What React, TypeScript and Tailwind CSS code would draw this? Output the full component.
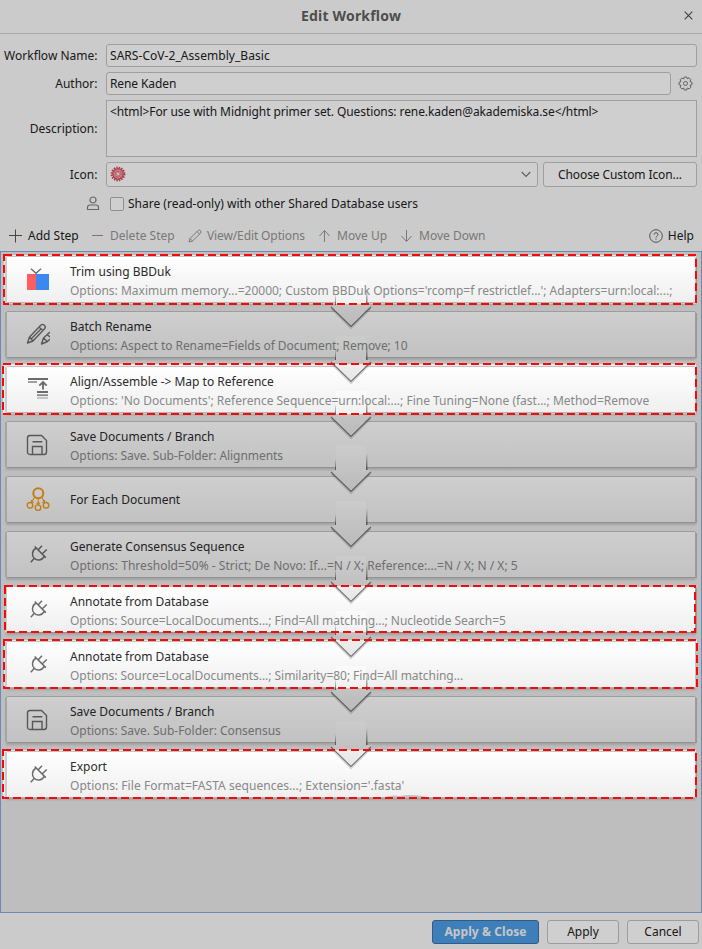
import type { ReactNode } from "react";

type IconName = "trim" | "rename" | "align" | "save" | "each" | "plug";

interface Step {
  icon: IconName;
  title: string;
  options?: string;
  tracking?: string;
}

const steps: Step[] = [
  { icon: "trim", title: "Trim using BBDuk", options: "Options: Maximum memory...=20000; Custom BBDuk Options='rcomp=f restrictlef...'; Adapters=urn:local:...;" },
  { icon: "rename", title: "Batch Rename", options: "Options: Aspect to Rename=Fields of Document; Remove; 10", tracking: "tracking-[-0.05px]" },
  { icon: "align", title: "Align/Assemble -> Map to Reference", options: "Options: 'No Documents'; Reference Sequence=urn:local:...; Fine Tuning=None (fast...; Method=Remove" },
  { icon: "save", title: "Save Documents / Branch", options: "Options: Save. Sub-Folder: Alignments", tracking: "tracking-[-0.05px]" },
  { icon: "each", title: "For Each Document" },
  { icon: "plug", title: "Generate Consensus Sequence", options: "Options: Threshold=50% - Strict; De Novo: If...=N / X; Reference:...=N / X; N / X; 5", tracking: "tracking-[0.03px]" },
  { icon: "plug", title: "Annotate from Database", options: "Options: Source=LocalDocuments...; Find=All matching...; Nucleotide Search=5", tracking: "tracking-[-0.045px]" },
  { icon: "plug", title: "Annotate from Database", options: "Options: Source=LocalDocuments...; Similarity=80; Find=All matching...", tracking: "tracking-[-0.045px]" },
  { icon: "save", title: "Save Documents / Branch", options: "Options: Save. Sub-Folder: Consensus", tracking: "tracking-[-0.03px]" },
  { icon: "plug", title: "Export", options: "Options: File Format=FASTA sequences...; Extension='.fasta'", tracking: "tracking-[0.045px]" },
];

/* Dashed frames around the steps that stay bright: x, y, width, height of the stroke centre. */
const frames = [
  [4, 255, 692, 49],
  [3, 364, 693, 50],
  [5, 586, 690, 46],
  [4, 640, 693, 48],
  [3, 750, 693, 48],
];

function StepIcon({ name }: { name: IconName }) {
  const s = { fill: "none", stroke: "#6c6c6c", strokeWidth: 1.4 };
  const art: Record<IconName, ReactNode> = {
    trim: (
      <>
        <rect x="1" y="7" width="9" height="16" fill="#ff5e5e" />
        <rect x="10" y="7" width="13" height="16" fill="#3d87f0" />
        <path d="M5 1.800L10 6.300L15 1.800" {...s} />
      </>
    ),
    rename: (
      <g {...s} strokeLinejoin="round">
        <path d="M1.500 21L3.500 15L15 3C17 1.300 20.500 4 18.800 6.500L7 19Z M3.500 15L7 19 M13 5L17 8.500 M5.500 16.500L15.500 6.500" />
        <path d="M24 10L17.500 16L15.500 22L21.500 19.500L24 17 M17.500 16L21.500 19.500 M21.500 13L24 15" />
      </g>
    ),
    align: (
      <g>
        <path d="M2 2H22" stroke="#6c6c6c" strokeWidth="2" />
        <path d="M2 5H11" stroke="#a0a0a0" strokeWidth="2" />
        <path d="M17 12.500V5.500M13.300 8.700L17 5L20.700 8.700" stroke="#6c6c6c" strokeWidth="1.900" fill="none" />
        <path d="M11 15H22" stroke="#6c6c6c" strokeWidth="2" />
        <path d="M11 18.200H22" stroke="#888" strokeWidth="1.800" />
        <path d="M11 21H22" stroke="#bbb" strokeWidth="1.600" />
      </g>
    ),
    save: (
      <g {...s}>
        <path d="M4 3.500H15.500L20.500 8.500V20Q20.500 22.500 18 22.500H4Q1.500 22.500 1.500 20V6Q1.500 3.500 4 3.500Z" />
        <path d="M6.500 22.500V14.500H16V22.500M6.500 9.700H16.300" />
      </g>
    ),
    each: (
      <g fill="none" stroke="#f09c1c">
        <circle cx="12.300" cy="6.200" r="5" strokeWidth="2" />
        <circle cx="4" cy="18.300" r="2.800" strokeWidth="1.400" />
        <circle cx="12" cy="20.700" r="2.800" strokeWidth="1.400" />
        <circle cx="20" cy="18.300" r="2.800" strokeWidth="1.400" />
        <path d="M8.500 10.500L5.500 15.300M12.200 11.500V17.700M16 10.500L18.500 15.300M5.500 13V15.300H8M10.500 15.700L12.200 17.500L14 15.700M16 15.300H18.500V13" strokeWidth="1.100" />
      </g>
    ),
    plug: (
      <g {...s} strokeWidth="1.500">
        <path d="M8.700 4.500L19.800 15.600M10 6C6 8.500 5.300 13.500 8.300 16.300C11.300 19.300 15.800 18.400 18.300 14.500M8.300 16.300L4.800 20.200M12 8L16 3.800M16 12L20.800 7.500" />
      </g>
    ),
  };
  return (
    <svg width="24" height="24" viewBox="0 0 24 24" className="relative z-20 -mt-px ml-[19px] shrink-0">
      {art[name]}
    </svg>
  );
}

function Arrow() {
  return (
    <svg width="44" height="52" viewBox="0 0 44 52" className="absolute top-[23px] left-[322px] z-10">
      <defs>
        <linearGradient id="shaft" x1="0" y1="0" x2="0" y2="1">
          <stop offset="0" stopColor="#fbfbfb" />
          <stop offset="1" stopColor="#e6e6e6" />
        </linearGradient>
        <linearGradient id="edge" x1="0" y1="0" x2="0" y2="1">
          <stop offset="0" stopColor="#555" stopOpacity="0" />
          <stop offset="1" stopColor="#555" stopOpacity="0.850" />
        </linearGradient>
      </defs>
      <path d="M3 28.500L22 47.500L41 28.500" fill="none" stroke="#000" strokeOpacity="0.150" strokeWidth="3" />
      <path d="M7 1H37V25H42L22 46L2 27L7 25Z" fill="url(#shaft)" />
      <rect x="6" y="14" width="1" height="11" fill="url(#edge)" />
      <rect x="37" y="8" width="1.500" height="17" fill="url(#edge)" />
      <path d="M2 27L22 46.500L42 27" fill="none" stroke="#777" strokeWidth="1.100" />
    </svg>
  );
}

function StepRow({ step, last }: { step: Step; last: boolean }) {
  return (
    <div className="relative mb-[10px] flex h-[45px] items-center bg-linear-to-b from-white to-[#efefef] shadow-[0_-1px_0_#c2c2c2,0_1px_0_#b4b4b4,1px_0_0_#c0c0c0,2px_1px_0_#bcbcbc,-2px_0_0_#cccccc,0_2px_2px_1px_#c8c8c8]">
      <StepIcon name={step.icon} />
      <div className="relative z-20 ml-[20px] whitespace-nowrap leading-[19px]">
        <div className={step.options ? "pt-[3px] text-[#2b2b2b]" : "text-[#2b2b2b]"}>{step.title}</div>
        {step.options && <div className={`text-[#888888] ${step.tracking ?? ""}`}>{step.options}</div>}
      </div>
      {!last && <Arrow />}
    </div>
  );
}

function Label({ children }: { children: ReactNode }) {
  return <div className="w-[98px] shrink-0 pr-[0.5px] text-right">{children}</div>;
}

function ToolIcon({ d, className }: { d: string; className: string }) {
  return (
    <svg width="14" height="14" viewBox="0 0 14 14" fill="none" stroke="currentColor" className={className}>
      <path d={d} />
    </svg>
  );
}

const field = "border border-[#c4c4c4] bg-white";
const button = "flex h-[24px] items-center justify-center rounded-[3px] border border-[#c0c0c0] bg-white";

export default function App() {
  return (
    <div className="relative flex h-[949px] w-[702px] flex-col overflow-hidden bg-[#fbfbfb] font-['Noto_Sans',sans-serif] text-[12px] text-[#222222]">
      <header className="relative flex h-[34px] shrink-0 items-center justify-center border-b border-[#cfcfcf] pb-[2px] text-[14px] font-bold tracking-[0.2px] text-[#606060]">
        Edit Workflow
        <svg width="9" height="9" viewBox="0 0 9 9" className="absolute top-[11px] right-[9px]">
          <path d="M0.700 0.700L8.300 8.300M8.300 0.700L0.700 8.300" stroke="#555" strokeWidth="1.200" />
        </svg>
      </header>

      <section className="flex shrink-0 flex-col pt-[10px]">
        <div className="flex h-[23px] items-center">
          <Label>Workflow Name:</Label>
          <div className={`${field} ml-[8px] flex h-[23px] w-[591px] items-center rounded-[3px] pl-[3px] tracking-[0.05px]`}>SARS-CoV-2_Assembly_Basic</div>
        </div>
        <div className="mt-[5px] flex h-[23px] items-center">
          <Label>Author:</Label>
          <div className={`${field} ml-[8px] flex h-[23px] w-[565px] items-center rounded-[3px] pl-[3px] tracking-[-0.1px]`}>Rene Kaden</div>
          <svg width="15" height="15" viewBox="0 0 15 15" fill="none" stroke="#777" className="ml-[7px]">
            <path d="M6.300 1H8.700L9.200 2.700L11 1.800L12.800 3.600L12 5.500L14 6.300V8.700L12 9.300L12.900 11.200L11.200 12.900L9.300 12L8.700 14H6.300L5.700 12L3.800 12.900L2.100 11.200L3 9.300L1 8.700V6.300L3 5.700L2.100 3.800L3.800 2.100L5.700 3Z" />
            <circle cx="7.500" cy="7.500" r="2" />
          </svg>
        </div>
        <div className="mt-[5px] flex h-[57px] items-center">
          <Label>Description:</Label>
          <div className={`${field} ml-[8px] h-[57px] w-[591px] pt-[2px] pl-[3px] tracking-[-0.09px]`}>&lt;html&gt;For use with Midnight primer set. Questions: rene.kaden@akademiska.se&lt;/html&gt;</div>
        </div>
        <div className="mt-[5px] flex h-[25px] items-center">
          <Label>Icon:</Label>
          <div className={`${field} ml-[8px] flex h-[25px] w-[432px] items-center justify-between rounded-[3px] pr-[6px] pl-[3px]`}>
            <svg width="16" height="16" viewBox="0 0 16 16" className="-mt-px">
              <circle cx="8" cy="8" r="6.500" fill="none" stroke="#dc3f50" strokeWidth="1.800" strokeDasharray="1.400 1.150" />
              <circle cx="8" cy="8" r="5.300" fill="#eba0a8" stroke="#d64555" strokeWidth="1.200" />
              <circle cx="8" cy="8" r="3" fill="none" stroke="#d96570" strokeWidth="1.200" strokeDasharray="1 1" />
              <circle cx="8" cy="8" r="1" fill="#fff" />
            </svg>
            <svg width="10" height="7" viewBox="0 0 10 7" fill="none" stroke="#777" strokeWidth="1.200">
              <path d="M0.700 1L5 5.500L9.300 1" />
            </svg>
          </div>
          <div className={`${field} ml-[5px] flex h-[25px] w-[154px] items-center justify-center rounded-[3px] tracking-[-0.1px]`}>Choose Custom Icon...</div>
        </div>
        <div className="mt-[9px] flex h-[15px] items-center pl-[86px]">
          <svg width="14" height="15" viewBox="0 0 14 15" fill="none" stroke="#808080" strokeWidth="1.200">
            <circle cx="7" cy="4" r="3" />
            <path d="M1.500 13.500V11.500Q1.500 9 4 9H10Q12.500 9 12.500 11.500V13.500Z" />
          </svg>
          <div className="ml-[10px] size-[14px] rounded-[2px] border border-[#b0b0b0] bg-white" />
          <span className="ml-[4px]">Share (read-only) with other Shared Database users</span>
        </div>
      </section>

      <nav className="mt-[15px] flex h-[20px] shrink-0 items-center pl-[9px] text-[#949494]">
        <ToolIcon d="M6.500 0.500V13.500M0 6.500H13" className="text-[#555555]" />
        <span className="ml-[5px] w-[63px] text-[#222222]">Add Step</span>
        <ToolIcon d="M1 6.500H12" className="" />
        <span className="ml-[5px] w-[78px]">Delete Step</span>
        <ToolIcon d="M1 13L2 9.500L10 1.500Q11.500 0.500 12.700 1.800Q13.700 3 12.500 4.200L4.500 12ZM9 2.500L11.500 5M2 9.500L4.500 12" className="" />
        <span className="ml-[5px] w-[111px] tracking-[-0.12px]">View/Edit Options</span>
        <ToolIcon d="M6.500 13V2M1.500 7L6.500 1.500L11.500 7" className="" />
        <span className="ml-[5px] w-[63px]">Move Up</span>
        <ToolIcon d="M6.500 1V12M1.500 7L6.500 12.500L11.500 7" className="" />
        <span className="ml-[5px]">Move Down</span>
        <div className="mr-[8px] ml-auto flex items-center text-[#222222]">
          <svg width="14" height="14" viewBox="0 0 14 14" fill="none" stroke="#666" className="mr-[5px]">
            <circle cx="7" cy="7" r="6.300" />
            <path d="M5 5.700Q5 3.700 7 3.700Q9 3.700 9 5.500Q9 6.500 7.800 7.200Q7 7.700 7 8.600M7 9.700V10.800" />
          </svg>
          Help
        </div>
      </nav>

      <main className="mt-[5px] h-[662px] shrink-0 border border-[#86aade] bg-[#ebebeb] pt-[5px] pr-[6px] pl-[6px]">
        {steps.map((step, i) => (
          <StepRow key={i} step={step} last={i === steps.length - 1} />
        ))}
      </main>

      <footer className="mt-[7px] flex shrink-0 justify-end gap-[8px] pr-[3px]">
        <div className="flex h-[24px] w-[107px] items-center justify-center rounded-[3px] border border-[#3c70ac] bg-[#4d9de6] font-bold tracking-[0.08px] text-[#f4f4f4]">Apply &amp; Close</div>
        <div className={`${button} w-[72px]`}>Apply</div>
        <div className={`${button} w-[72px]`}>Cancel</div>
      </footer>

      {/* Dimming layer with openings for the highlighted steps */}
      <div className="absolute inset-0 z-30 bg-black/19 [clip-path:path(evenodd,'M0_0H702V949H0Z_M4_255H696V304H4Z_M3_364H696V414H3Z_M5_586H695V632H5Z_M4_640H697V688H4Z_M3_750H696V798H3Z')]" />
      <svg width="702" height="949" viewBox="0 0 702 949" className="absolute inset-0 z-40">
        <path d="M384 797Q393 794.500 400 796Q410 794 425 796.500V797.500H384Z" fill="#c2c2c2" />
        {frames.map(([x, y, w, h]) => (
          <rect key={y} x={x} y={y} width={w} height={h} fill="none" stroke="#f80808" strokeWidth="2" strokeDasharray="8 4" />
        ))}
      </svg>
    </div>
  );
}
